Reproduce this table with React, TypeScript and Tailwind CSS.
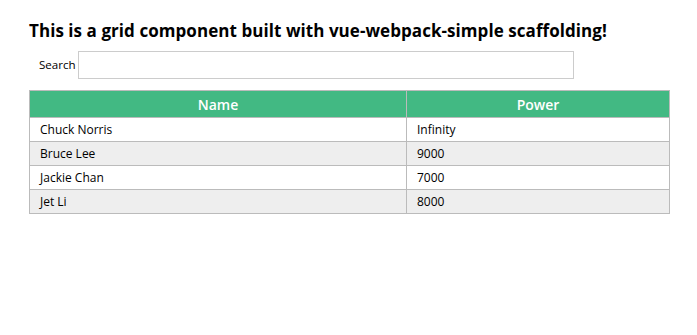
import { useState } from "react";

interface Hero {
  name: string;
  power: string;
}

const heroes: Hero[] = [
  { name: "Chuck Norris", power: "Infinity" },
  { name: "Bruce Lee", power: "9000" },
  { name: "Jackie Chan", power: "7000" },
  { name: "Jet Li", power: "8000" },
];

const columns: { key: keyof Hero; label: string; width: string }[] = [
  { key: "name", label: "Name", width: "w-[377px]" },
  { key: "power", label: "Power", width: "w-[263px]" },
];

export default function App() {
  const [query, setQuery] = useState("");

  const rows = heroes.filter((h) =>
    Object.values(h).some((v) => v.toLowerCase().includes(query.toLowerCase()))
  );

  return (
    <div className="min-h-[335px] bg-white pl-[29px] pt-[19px] font-['Open_Sans',sans-serif] text-black">
      <h1 className="text-[17px] font-bold leading-[24px] tracking-[0.06px]">
        This is a grid component built with vue-webpack-simple scaffolding!
      </h1>

      <form
        className="mt-[8px] flex items-center gap-[2px] pl-[10px]"
        onSubmit={(e) => e.preventDefault()}
      >
        <label htmlFor="search" className="text-[11.6px]">
          Search
        </label>
        <input
          id="search"
          value={query}
          onChange={(e) => setQuery(e.target.value)}
          className="h-[28px] w-[496px] border border-[#cccccc] px-1 text-[12px] outline-none"
        />
      </form>

      {/* grid */}
      <table className="mt-[11px] border-collapse border border-[#bbbbbb] text-[12px]">
        <thead>
          <tr>
            {columns.map((c) => (
              <th
                key={c.key}
                className={`${c.width} h-[27px] border border-[#bbbbbb] bg-[#42b983] p-0 text-center text-[14px] font-semibold text-white`}
              >
                {c.label}
              </th>
            ))}
          </tr>
        </thead>
        <tbody>
          {rows.map((row, i) => (
            <tr key={row.name} className={i % 2 === 1 ? "bg-[#eeeeee]" : "bg-white"}>
              {columns.map((c) => (
                <td
                  key={c.key}
                  className="h-[24px] border border-[#bbbbbb] px-[10px] py-0 text-left"
                >
                  {row[c.key]}
                </td>
              ))}
            </tr>
          ))}
        </tbody>
      </table>
    </div>
  );
}
